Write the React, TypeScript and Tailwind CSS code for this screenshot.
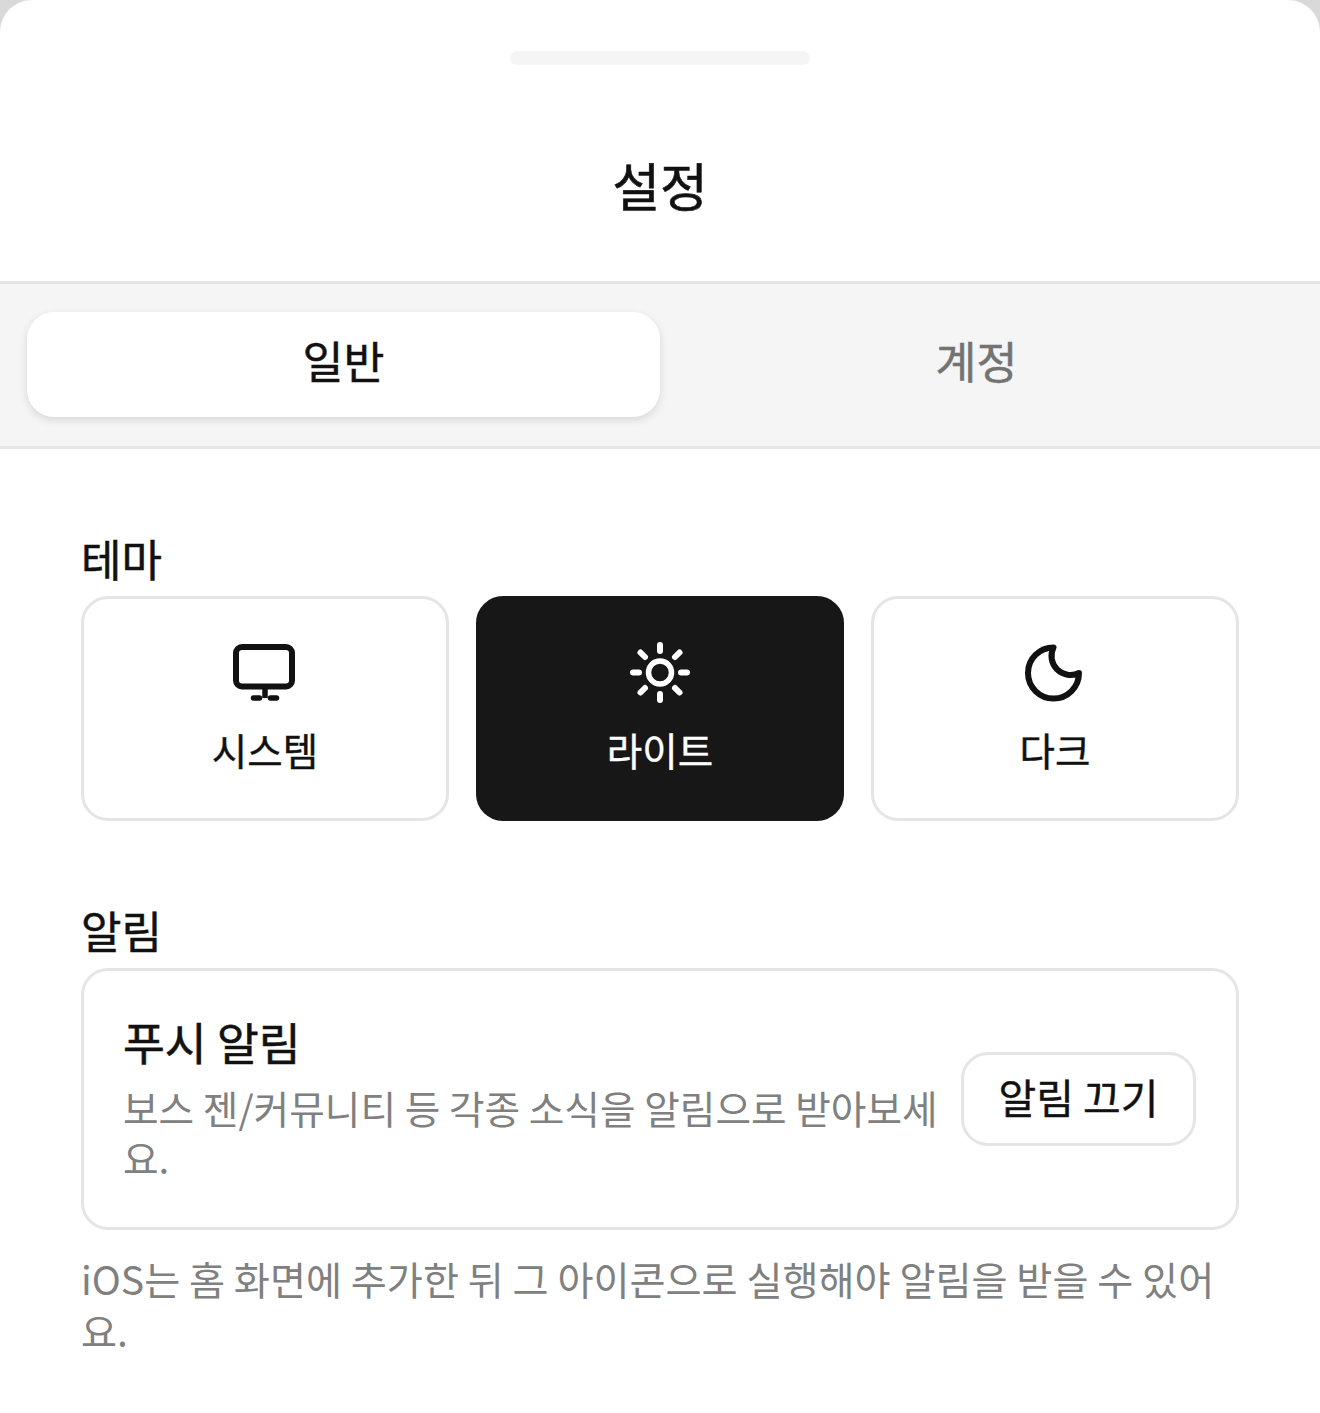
const font = { fontFamily: '"Noto Sans CJK KR", "Noto Sans", sans-serif' };

const themes = [
  { label: "시스템", icon: "monitor", active: false },
  { label: "라이트", icon: "sun", active: true },
  { label: "다크", icon: "moon", active: false },
];

function ThemeIcon({ name }: { name: string }) {
  if (name === "monitor") {
    return (
      <svg width="66" height="66" viewBox="0 0 66 66" fill="none" stroke="currentColor" strokeLinecap="round" strokeLinejoin="round" strokeWidth="6">
        <rect x="4" y="7" width="56" height="39.500" rx="6" />
        <path d="M33 47v11" strokeWidth="5.500" strokeLinecap="butt" />
        <path d="M21.500 58h6M38.500 58h6" strokeWidth="5.500" />
      </svg>
    );
  }
  if (name === "sun") {
    return (
      <svg width="66" height="66" viewBox="0 0 66 66" fill="none" stroke="currentColor" strokeLinecap="round" strokeWidth="6">
        <circle cx="33" cy="32.500" r="11.500" strokeWidth="5.500" />
        <path d="M33 5v6M33 54v6M6 32.500h6M54 32.500h6M13.500 12.500l4.500 4.500M48 48l4.500 4.500M13.500 52.500l4.500-4.500M48 17l4.500-4.500" />
      </svg>
    );
  }
  return (
    <svg width="66" height="66" viewBox="0 0 66 66" fill="none" stroke="currentColor" strokeLinecap="round" strokeLinejoin="round" strokeWidth="6">
      <path d="M31.500 7.500A25.500 25.500 0 1 0 57 33A19 19 0 0 1 31.500 7.500Z" />
    </svg>
  );
}

export default function App() {
  return (
    <div className="h-[1413px] w-[1320px] overflow-hidden bg-[#d9d9d9]" style={font}>
      <div className="h-full rounded-t-[32px] bg-white">
        {/* drag handle + title */}
        <div className="flex h-[281px] flex-col items-center pt-[51px]">
          <div className="h-[14px] w-[300px] rounded-full bg-[#f5f5f5]" />
          <h1 className="mt-[87px] text-[52px] leading-[66px] font-normal text-[#111] [-webkit-text-stroke:0.6px]">설정</h1>
        </div>

        {/* tabs */}
        <div className="flex h-[168px] items-start border-y-[3px] border-[#e5e5e5] bg-[#f5f5f5] px-[27px] pt-[28px]">
          <div className="flex h-[105px] flex-1 items-center justify-center rounded-[27px] bg-white pb-[8px] text-[44.500px] font-normal text-[#111] shadow-[0_3px_8px_rgba(0,0,0,0.12)] [-webkit-text-stroke:0.5px]">
            일반
          </div>
          <div className="flex h-[105px] flex-1 items-center justify-center pb-[8px] text-[44.500px] font-normal text-[#737373] [-webkit-text-stroke:0.5px]">
            계정
          </div>
        </div>

        <div className="px-[81px]">
          <h2 className="mt-[81px] text-[44px] leading-[56px] font-normal text-[#111] [-webkit-text-stroke:0.5px]">테마</h2>
          <div className="mt-[10px] grid grid-cols-3 gap-[27px]">
            {themes.map((t) => (
              <div
                key={t.label}
                className={
                  t.active
                    ? "flex h-[225px] flex-col items-center rounded-[27px] border-[3px] border-[#171717] bg-[#171717] pt-[41px] text-white"
                    : "flex h-[225px] flex-col items-center rounded-[27px] border-[3px] border-[#e5e5e5] bg-white pt-[41px] text-[#111]"
                }
              >
                <ThemeIcon name={t.icon} />
                <span className="mt-[16px] text-[38.500px] leading-[55px] font-normal [-webkit-text-stroke:0.4px]">{t.label}</span>
              </div>
            ))}
          </div>

          <h2 className="mt-[81px] text-[44px] leading-[56px] font-normal text-[#111] [-webkit-text-stroke:0.5px]">알림</h2>
          <div className="mt-[10px] flex h-[262px] items-center gap-[20px] rounded-[27px] border-[3px] border-[#e5e5e5] pr-[40px] pl-[39px]">
            <div className="min-w-0 flex-1 pb-[8px]">
              <div className="mb-[8px] text-[45.500px] leading-[66px] font-normal text-[#111] [-webkit-text-stroke:0.6px]">푸시 알림</div>
              <p className="text-[38.700px] leading-[50px] text-[#808080]">
                보스 젠/커뮤니티 등 각종 소식을 알림으로 받아보세요.
              </p>
            </div>
            <div className="flex h-[94px] w-[235px] shrink-0 items-center justify-center rounded-[27px] border-[3px] border-[#e5e5e5] pb-[4px] text-[41px] font-normal text-[#111] [-webkit-text-stroke:0.4px]">
              알림 끄기
            </div>
          </div>
          <p className="mt-[22px] text-[39.200px] leading-[52px] text-[#808080]">
            iOS는 홈 화면에 추가한 뒤 그 아이콘으로 실행해야 알림을 받을 수 있어요.
          </p>
        </div>
      </div>
    </div>
  );
}
